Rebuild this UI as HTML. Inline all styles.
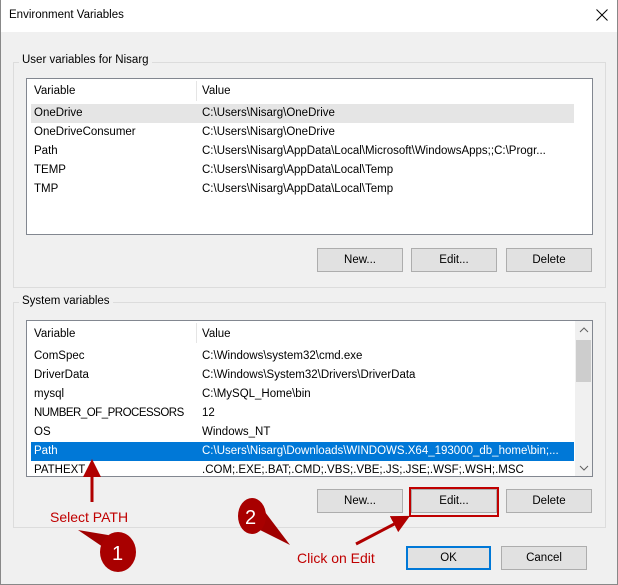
<!DOCTYPE html><html><head><style>
body{margin:0;width:618px;height:585px;background:#f0f0f0;font-family:"Liberation Sans",sans-serif;font-size:11.5px;color:#000;position:relative;overflow:hidden}
.a{position:absolute}
.grp{position:absolute;border:1px solid #dcdcdc}
.lbl{position:absolute;background:#f0f0f0;padding:0 3px}
.list{position:absolute;background:#fff;border:1px solid #828790}
.btn{position:absolute;background:#e1e1e1;border:1px solid #adadad;text-align:center;line-height:22px;box-sizing:border-box;height:24px}
.row{position:absolute;left:4px;height:19px;line-height:19px;width:543px;white-space:nowrap}
.row span{position:absolute;left:3px}.row span+span{left:171px}
</style></head><body>
<div class="a" style="left:0;top:0;width:618px;height:32px;background:#fff"></div>
<div class="a" style="left:0;top:0;width:1px;height:585px;background:#888"></div>
<div class="a" style="right:0;top:0;width:1px;height:585px;background:#888"></div>
<div class="a" style="left:0;bottom:0;width:618px;height:1px;background:#888"></div>
<div class="a" style="left:9px;top:9px">Environment Variables</div>
<svg class="a" style="left:596px;top:9px" width="12" height="12"><path d="M0.5,0.5L11.5,11.5M11.5,0.5L0.5,11.5" stroke="#000" stroke-width="1"/></svg>

<div class="grp" style="left:13px;top:62px;width:591px;height:224px"></div>
<div class="lbl" style="left:19px;top:54px">User variables for Nisarg</div>
<div class="list" style="left:26px;top:78px;width:565px;height:155px">
<div class="a" style="left:169px;top:2px;width:1px;height:20px;background:#e5e5e5"></div>
<div class="row" style="top:3px"><span>Variable</span><span>Value</span></div>
<div class="row" style="top:25px;background:#e5e5e5"><span>OneDrive</span><span>C:\Users\Nisarg\OneDrive</span></div>
<div class="row" style="top:44px"><span>OneDriveConsumer</span><span>C:\Users\Nisarg\OneDrive</span></div>
<div class="row" style="top:63px"><span>Path</span><span>C:\Users\Nisarg\AppData\Local\Microsoft\WindowsApps;;C:\Progr...</span></div>
<div class="row" style="top:82px"><span>TEMP</span><span>C:\Users\Nisarg\AppData\Local\Temp</span></div>
<div class="row" style="top:101px"><span>TMP</span><span>C:\Users\Nisarg\AppData\Local\Temp</span></div>
</div>
<div class="btn" style="left:317px;top:248px;width:86px">New...</div>
<div class="btn" style="left:411px;top:248px;width:86px">Edit...</div>
<div class="btn" style="left:506px;top:248px;width:86px">Delete</div>

<div class="grp" style="left:13px;top:302px;width:591px;height:224px"></div>
<div class="lbl" style="left:19px;top:295px">System variables</div>
<div class="list" style="left:26px;top:320px;width:565px;height:155px;overflow:hidden">
<div class="a" style="left:169px;top:2px;width:1px;height:20px;background:#e5e5e5"></div>
<div class="row" style="top:4px"><span>Variable</span><span>Value</span></div>
<div class="row" style="top:26px"><span>ComSpec</span><span>C:\Windows\system32\cmd.exe</span></div>
<div class="row" style="top:45px"><span>DriverData</span><span>C:\Windows\System32\Drivers\DriverData</span></div>
<div class="row" style="top:64px"><span>mysql</span><span>C:\MySQL_Home\bin</span></div>
<div class="row" style="top:83px"><span style="letter-spacing:-0.5px">NUMBER_OF_PROCESSORS</span><span>12</span></div>
<div class="row" style="top:102px"><span>OS</span><span>Windows_NT</span></div>
<div class="row" style="top:121px;background:#0078d7;color:#fff"><span>Path</span><span>C:\Users\Nisarg\Downloads\WINDOWS.X64_193000_db_home\bin;...</span></div>
<div class="row" style="top:140px"><span>PATHEXT</span><span>.COM;.EXE;.BAT;.CMD;.VBS;.VBE;.JS;.JSE;.WSF;.WSH;.MSC</span></div>
<div class="a" style="left:548px;top:0;width:17px;height:155px;background:#f0f0f0"></div>
<div class="a" style="left:549px;top:19px;width:15px;height:42px;background:#cdcdcd"></div>
<svg class="a" style="left:552px;top:6px" width="10" height="145"><path d="M1,5L5,1L9,5M1,139L5,143L9,139" stroke="#606060" fill="none"/></svg>
</div>
<div class="btn" style="left:317px;top:489px;width:86px">New...</div>
<div class="btn" style="left:411px;top:489px;width:86px">Edit...</div>
<div class="a" style="left:409px;top:487px;width:86px;height:26px;border:2px solid #c00000"></div>
<div class="btn" style="left:506px;top:489px;width:86px">Delete</div>
<div class="btn" style="left:406px;top:546px;width:85px;border:2px solid #0078d7;line-height:20px">OK</div>
<div class="btn" style="left:501px;top:546px;width:86px">Cancel</div>

<svg class="a" style="left:0;top:0" width="618" height="585">
<defs><marker id="m" markerWidth="6" markerHeight="6" refX="3" refY="3" orient="auto"><path d="M0,0L6,3L0,6z" fill="#b00000"/></marker></defs>
<line x1="92" y1="502" x2="92" y2="468" stroke="#b00000" stroke-width="3" marker-end="url(#m)"/>
<line x1="356" y1="544" x2="402" y2="520" stroke="#b00000" stroke-width="3" marker-end="url(#m)"/>
<path d="M78,530L108,535L122,560z" fill="#a00000"/>
<ellipse cx="118" cy="552" rx="18" ry="20" fill="#a80000"/>
<text x="112" y="560" fill="#fff" font-size="20" font-family="Liberation Sans">1</text>
<path d="M240,520L265,512L290,545z" fill="#a00000"/>
<ellipse cx="252" cy="516" rx="14" ry="18" fill="#a80000"/>
<text x="245" y="524" fill="#fff" font-size="20" font-family="Liberation Sans">2</text>
<text x="50" y="522" fill="#c00000" font-size="14" font-family="Liberation Sans">Select PATH</text>
<text x="297" y="563" fill="#c00000" font-size="14" font-family="Liberation Sans">Click on Edit</text>
</svg>
</body></html>
